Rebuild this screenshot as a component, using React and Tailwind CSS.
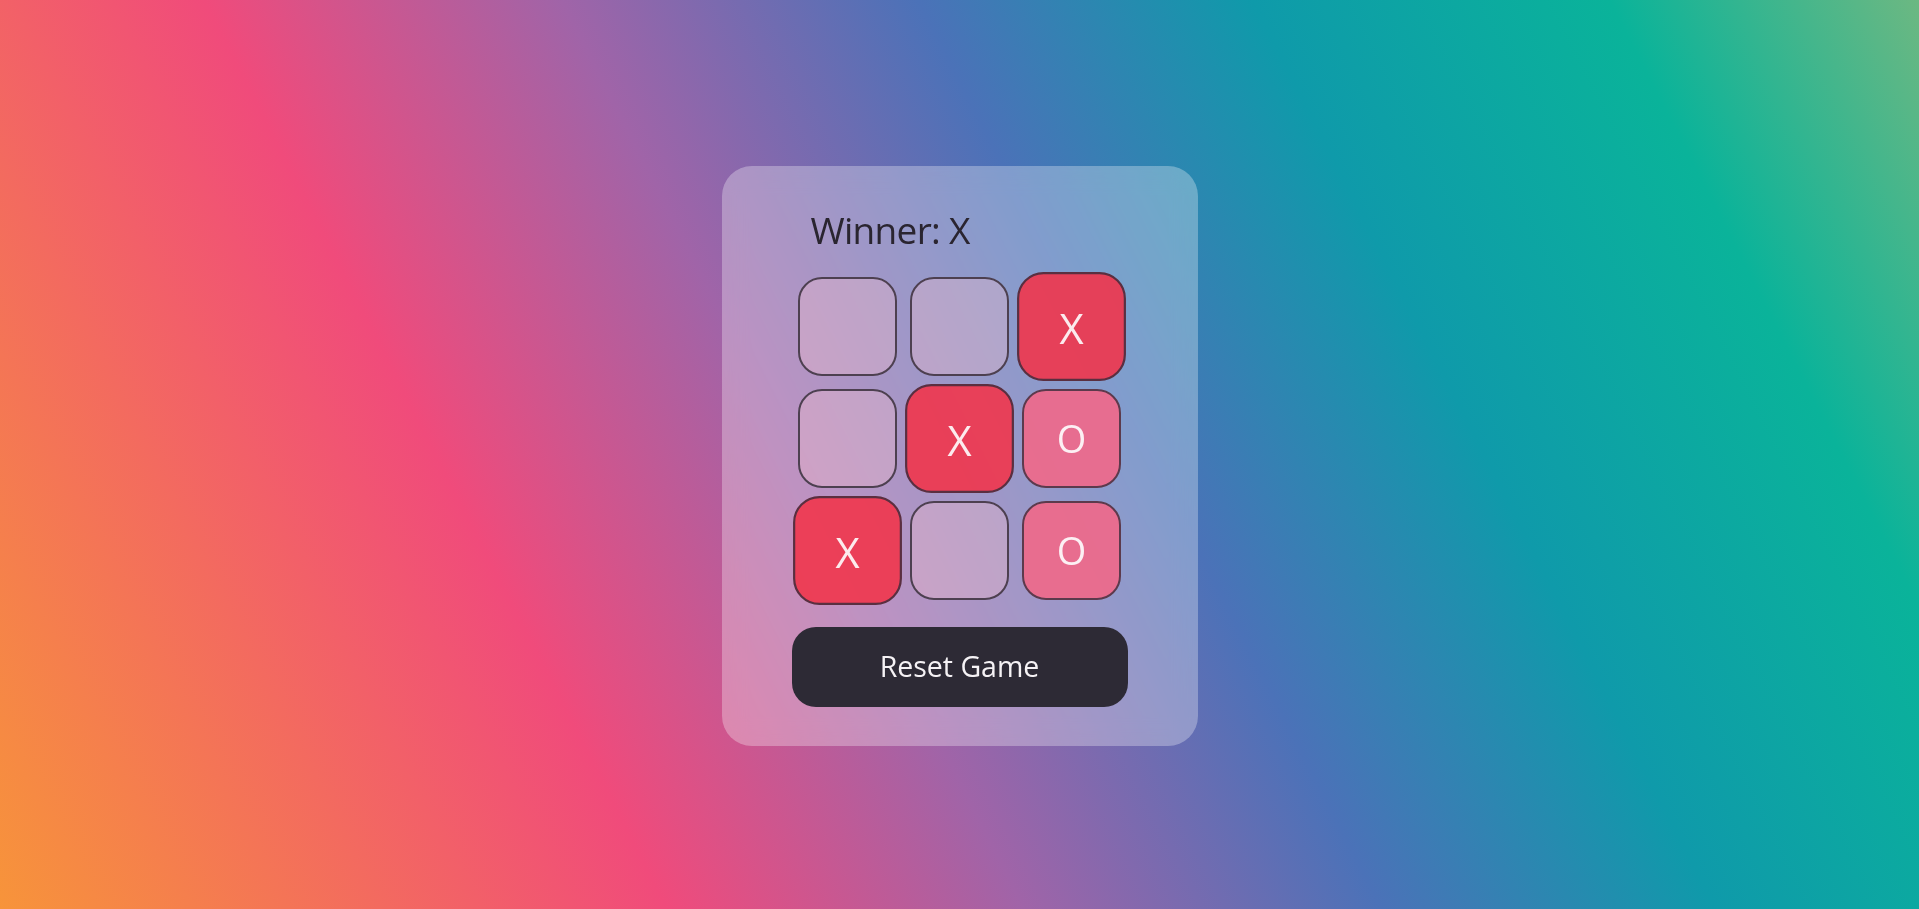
import React from "react";

const board = [
  [null, null, "X"],
  [null, "X", "O"],
  ["X", null, "O"],
];
const winLine = ["0-2", "1-1", "2-0"];

function Cell({ value, win }) {
  let cls =
    "h-[99px] w-[99px] rounded-3xl border-2 flex items-center justify-center text-[38px] leading-none text-white/90 ";
  if (value === "X") {
    cls += "bg-[#f1364d]/90 border-[#5a2f40] ";
  } else if (value === "O") {
    cls += "bg-[#ec6a8c]/95 border-[#5c3a4c] ";
  } else {
    cls += "bg-[#f2bccb]/35 border-[#4d4050] ";
  }
  if (win) cls += "scale-110";
  return <div className={cls}>{value}</div>;
}

export default function App() {
  return (
    <div
      className="min-h-screen flex items-center justify-center bg-[linear-gradient(63deg,#f7943a_0%,#f04b7b_28%,#a064a8_43%,#4b72b8_58%,#0f9aaa_72%,#0ab39a_87%,#6cb882_100%)]"
      style={{ fontFamily: '"Open Sans", "Noto Sans", sans-serif' }}
    >
      <div className="w-[476px] rounded-[30px] bg-white/30 backdrop-blur-md px-[70px] pt-[41px] pb-[39px] mt-[2px] flex flex-col">
        <div className="ml-[19px] text-[37px] leading-[46px] tracking-[-0.7px] text-[#2a2530]">
          Winner: X
        </div>
        <div className="mt-6 grid grid-cols-[repeat(3,99px)] gap-[13px] justify-center">
          {board.map((row, r) =>
            row.map((v, c) => (
              <Cell key={`${r}-${c}`} value={v} win={winLine.includes(`${r}-${c}`)} />
            ))
          )}
        </div>
        <button className="mt-[27px] h-20 w-full rounded-3xl bg-[#2d2a35] text-[#f5f2f5] text-[28.5px]">
          Reset Game
        </button>
      </div>
    </div>
  );
}
